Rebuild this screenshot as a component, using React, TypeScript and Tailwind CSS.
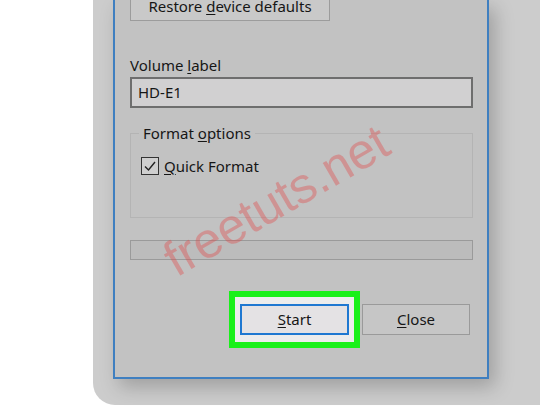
import React from 'react';

const font = { fontFamily: '"Noto Sans", "Open Sans", Arial, sans-serif' };

function Key({ children }: { children: React.ReactNode }) {
  return <span className="underline underline-offset-2 decoration-1">{children}</span>;
}

export default function App() {
  return (
    <div className="w-[540px] h-[406px] bg-white overflow-hidden relative" style={font}>
      {/* Gray desktop area */}
      <div className="ml-[93px] h-[405px] bg-[#cccccc] rounded-bl-[22px] pl-[20px] flex">
        {/* Dialog */}
        <div className="w-[376px] h-[379px] bg-[#c2c2c2] border-x-2 border-b-2 border-[#3f7fc0] shadow-[6px_8px_18px_rgba(0,0,0,0.22)] px-[15px] flex flex-col text-[15px] text-[#161616] relative">
          {/* Restore button */}
          <div className="-mt-[8px] w-[200px] h-[29px] bg-[#c9c9c9] border border-[#9c9c9c] flex items-center justify-center leading-none">
            <span>Restore <Key>d</Key>evice defaults</span>
          </div>

          {/* Volume label */}
          <div className="mt-[35px] leading-[18px]">
            Volume <Key>l</Key>abel
          </div>
          <div className="mt-[3px] h-[31px] w-[343px] bg-[#d1d0d1] border-2 border-[#6e6e6e] flex items-center px-[6px] leading-none">
            HD-E1
          </div>

          {/* Format options group */}
          <div className="mt-[25px] w-[343px] h-[85px] border border-[#b4b4b4] relative">
            <div className="absolute -top-[11px] left-[8px] px-[4px] bg-[#c2c2c2] leading-[20px]">
              Format <Key>o</Key>ptions
            </div>
            <div className="mt-[23px] ml-[10px] flex items-center gap-[5px] leading-none">
              <div className="w-[18px] h-[18px] border border-[#333] bg-[#cfcfcf] flex items-center justify-center">
                <svg width="14" height="14" viewBox="0 0 14 14">
                  <path d="M2 7.5 L5.5 11 L12 3" fill="none" stroke="#222" strokeWidth="1.4" />
                </svg>
              </div>
              <span>
                <Key>Q</Key>uick Format
              </span>
            </div>
          </div>

          {/* Progress bar */}
          <div className="mt-[22px] w-[343px] h-[20px] bg-[#bcbcbc] border border-[#9a9a9a]" />

          {/* Buttons */}
          <div className="mt-[44px] flex gap-[13px] pl-[110px]">
            <div className="relative">
              <div className="absolute -inset-x-[11px] -inset-y-[13px] border-[6px] border-[#19f019] bg-[#ececec]" />
              <div className="relative w-[109px] h-[31px] bg-[#e4e2e4] border-2 border-[#1f78d1] flex items-center justify-center leading-none">
                <span>
                  <Key>S</Key>tart
                </span>
              </div>
            </div>
            <div className="w-[108px] h-[31px] bg-[#c6c6c6] border border-[#9a9a9a] flex items-center justify-center leading-none">
              <span>
                <Key>C</Key>lose
              </span>
            </div>
          </div>
        </div>
      </div>

      {/* Watermark */}
      <div
        className="absolute left-[168px] top-[238px] text-[50px] leading-none text-[rgba(226,70,70,0.38)] origin-left -rotate-[30deg] pointer-events-none"
        style={{ fontFamily: '"Liberation Sans", Arial, sans-serif' }}
      >
        freetuts.net
      </div>
    </div>
  );
}
